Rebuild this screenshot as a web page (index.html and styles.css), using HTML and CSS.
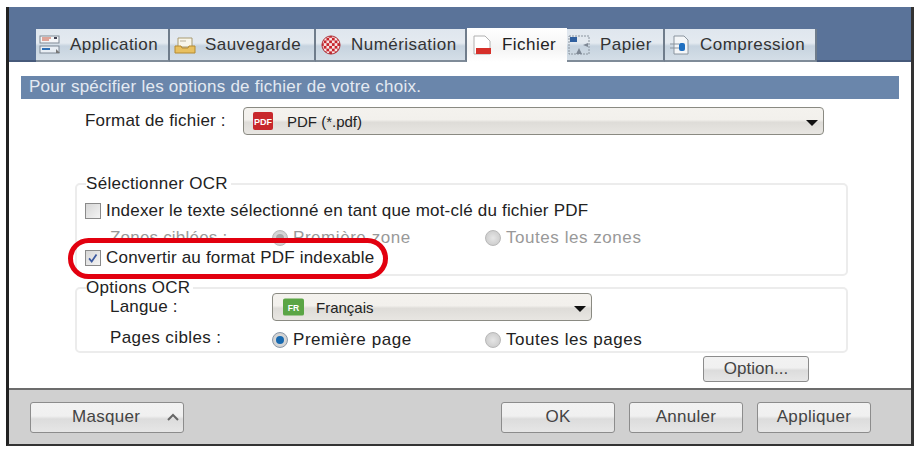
FILE: index.html
```html
<!DOCTYPE html>
<html lang="fr">
<head>
<meta charset="utf-8">
<title>Options de fichier</title>
<link rel="stylesheet" href="styles.css">
</head>
<body>
<div class="window">
  <div class="tabband">
    <div class="tab w-app"><svg class="ti" viewBox="0 0 22 20"><rect x="1" y="1" width="19" height="7" fill="#f4f6f8" stroke="#7d8794"/><rect x="1" y="11" width="19" height="7" fill="#e8eef4" stroke="#7d8794"/><path d="M3 3h9M3 5h7" stroke="#c8553d"/><path d="M3 14h8" stroke="#2f6fb5" stroke-width="2"/><rect x="15" y="2" width="3" height="2" fill="#445"/><path d="M17 14l4 4h-4z" fill="#777"/></svg><span>Application</span></div>
    <div class="tab w-sau"><svg class="ti" viewBox="0 0 22 20"><path d="M4 3h14v9H4z" fill="#f8f6ea" stroke="#a89a70"/><path d="M6 6h6" stroke="#b8b09a"/><path d="M1 11h6l1 2h6l1-2h6v7H1z" fill="#e8c060" stroke="#b48a30"/></svg><span>Sauvegarde</span></div>
    <div class="tab w-num"><svg class="ti" viewBox="0 0 22 22"><defs><pattern id="chk" width="6" height="6" patternUnits="userSpaceOnUse"><rect width="6" height="6" fill="#c8242c"/><rect width="3" height="3" fill="#f6e6e6"/><rect x="3" y="3" width="3" height="3" fill="#f6e6e6"/></pattern></defs><circle cx="11" cy="11" r="10" fill="url(#chk)" stroke="#a82830"/></svg><span>Numérisation</span></div>
    <div class="tab active w-fic"><svg class="ti" viewBox="0 0 22 20"><path d="M3 1h11l5 5v13H3z" fill="#fff" stroke="#b0b0b0"/><rect x="5" y="13" width="15" height="6" fill="#d6302a"/></svg><span>Fichier</span></div>
    <div class="tab w-pap"><svg class="ti" viewBox="0 0 22 20"><rect x="1" y="1" width="20" height="18" fill="none" stroke="#8a949e" stroke-dasharray="2 1"/><rect x="2" y="2" width="7" height="5" fill="#2f5f9f"/><path d="M20 8l-5 2 5 2zM8 19l3-6 3 6z" fill="#7d8794"/></svg><span>Papier</span></div>
    <div class="tab w-com"><svg class="ti" viewBox="0 0 22 20"><path d="M5 1h10l4 4v14H5z" fill="#f4f6f8" stroke="#8a949e"/><path d="M1 9h9M1 13h9" stroke="#8a949e"/><rect x="10" y="8" width="6" height="8" rx="2" fill="#1f6fc0"/></svg><span>Compression</span></div>
  </div>
  <div class="content">
    <div class="info">Pour spécifier les options de fichier de votre choix.</div>
    <div class="formatrow">
      <label class="fmtlabel">Format de fichier :</label>
      <div class="select big"><svg class="badge" viewBox="0 0 20 18"><rect width="20" height="18" rx="2" fill="#c8282c"/><text x="10" y="12.5" class="badgetext" text-anchor="middle">PDF</text></svg><span class="seltext">PDF (*.pdf)</span><i class="arrow"></i></div>
    </div>
    <fieldset class="group g1">
      <legend>Sélectionner OCR</legend>
      <div class="row r1"><span class="check"></span><span>Indexer le texte sélectionné en tant que mot-clé du fichier PDF</span></div>
      <div class="row r2 disabled"><span class="lab">Zones ciblées :</span><span class="opt o1"><span class="radio on-off"></span>Première zone</span><span class="opt"><span class="radio"></span>Toutes les zones</span></div>
      <div class="row r3"><span class="check"><svg viewBox="0 0 16 16"><path d="M3.5 8.5l3 3.5 5.5-8" fill="none" stroke="#3c5aa0" stroke-width="2"/></svg></span><span>Convertir au format PDF indexable</span></div>
      <div class="ring"></div>
    </fieldset>
    <fieldset class="group g2">
      <legend>Options OCR</legend>
      <div class="row r4"><span class="lab">Langue :</span><div class="select small"><svg class="badge fr" viewBox="0 0 22 18"><rect width="22" height="18" rx="2" fill="#5aa545"/><text x="11" y="13" class="badgetext" text-anchor="middle">FR</text></svg><span class="seltext tight">Français</span><i class="arrow"></i></div></div>
      <div class="row r5"><span class="lab up">Pages cibles :</span><span class="opt o1"><span class="radio sel"></span>Première page</span><span class="opt"><span class="radio"></span>Toutes les pages</span></div>
    </fieldset>
    <div class="optrow"><button class="btn opt-btn">Option...</button></div>
  </div>
  <div class="footer">
    <button class="btn fbtn masquer"><span>Masquer</span><svg class="chev" viewBox="0 0 14 9"><path d="M2 7l5-5 5 5" fill="none" stroke="#666" stroke-width="2"/></svg></button>
    <div class="fright">
      <button class="btn fbtn">OK</button>
      <button class="btn fbtn">Annuler</button>
      <button class="btn fbtn">Appliquer</button>
    </div>
  </div>
</div>
</body>
</html>
```
FILE: styles.css
```css
* { box-sizing: border-box; }
html, body { margin: 0; padding: 0; background: #fff; }
body { font-family: "Liberation Sans", Arial, sans-serif; font-size: 17px; letter-spacing: 0.2px; color: #222; }
.window { margin: 7px 0 0 6px; width: 908px; height: 439px; border-left: 3px solid #222; border-right: 3px solid #333; border-bottom: 2px solid #333; display: flex; flex-direction: column; }
.tabband { height: 55px; background: #5a7399; display: flex; align-items: flex-end; padding-left: 27px; flex: none; box-shadow: inset 0 -2px 0 #46597a; }
.tab { height: 33px; display: flex; align-items: center; padding-left: 4px; gap: 9px; letter-spacing: 0.45px; background: linear-gradient(#dfe6ee, #e4eaf0 45%, #c6d3df 55%, #d4dee7); border-bottom: 2px solid #7f8b98; border-right: 2px solid #6f7c8b; color: #333; }
.tab.active { height: 34px; background: linear-gradient(#fff, #f4f4f4 60%, #fff); border: 0; color: #222; }
.w-app { width: 134px; padding-left: 3px; } .w-sau { width: 146px; } .w-num { width: 151px; } .w-fic { width: 100px; } .w-pap { width: 98px; padding-left: 1px; gap: 10px; } .w-com { width: 152px; }
.ti { width: 22px; height: 20px; flex: none; }
.content { flex: 1; background: #fff; padding: 14px 0 0 12px; display: flex; flex-direction: column; }
.info { width: 878px; height: 23px; line-height: 22px; background: #6a86ab; color: #e4eaf2; padding-left: 8px; flex: none; letter-spacing: 0.25px; }
.formatrow { display: flex; align-items: center; margin-top: 8px; height: 28px; padding-left: 64px; flex: none; }
.fmtlabel { width: 158px; }
.select { height: 28px; border: 1px solid #8a8a82; border-radius: 4px; display: flex; align-items: center; background: linear-gradient(#f4f2ee, #f2f0ec 45%, #dedcd8 55%, #e8e6e2); position: relative; letter-spacing: 0; }
.big { width: 581px; padding-left: 9px; }
.small { width: 320px; padding-left: 10px; }
.badge { width: 20px; height: 18px; flex: none; }
.badge.fr { width: 21px; }
.badgetext { font-size: 9px; font-weight: bold; fill: #fff; font-family: "Liberation Sans", sans-serif; }
.seltext { margin-left: 14px; font-size: 15px; }
.seltext.tight { margin-left: 12px; }
.arrow { position: absolute; right: 5px; top: 12px; width: 0; height: 0; border: 6px solid transparent; border-top: 6px solid #111; border-bottom: 0; }
.group { margin: 0 0 0 54px; padding: 0 8px; width: 773px; border: 2px solid #ececec; border-radius: 5px; position: relative; flex: none; }
.g1 { margin-top: 40px; height: 101px; }
.g2 { margin-top: 3px; height: 74px; }
.group legend { padding: 0 3px 0 0; margin-left: 1px; line-height: 18px; height: 18px; font-size: 17px; letter-spacing: 0.3px; }
.row { display: flex; align-items: center; height: 20px; white-space: nowrap; }
.r1 { margin-top: 8px; }
.r2 { margin-top: 7px; padding-left: 25px; color: #999; }
.r3 { margin-top: 0; }
.r4 { padding-left: 25px; height: 28px; margin-top: -4px; }
.r5 { margin-top: 7px; padding-left: 25px; height: 24px; }
.lab { width: 162px; flex: none; }
.up { position: relative; top: -2px; letter-spacing: 0.4px; }
.o1 { width: 213px; flex: none; }
.opt { display: inline-flex; align-items: center; gap: 5px; letter-spacing: 0.55px; }
.check { width: 16px; height: 16px; border: 1px solid #8a8a8a; background: linear-gradient(135deg, #d6d6d6, #f4f4f4); margin-right: 5px; flex: none; display: block; }
.check svg { display: block; width: 14px; height: 14px; }
.radio { width: 16px; height: 16px; border-radius: 50%; background: radial-gradient(#e6e6e6, #c6c6c6); border: 1px solid #b8b8b8; flex: none; position: relative; }
.radio.on-off::after, .radio.sel::after { content: ""; position: absolute; left: 3px; top: 3px; width: 8px; height: 8px; border-radius: 50%; background: #a8a8a8; }
.radio.sel { border-color: #8a98a8; }
.radio.sel::after { background: #1769b0; }
.ring { position: absolute; left: -9px; top: 45px; width: 320px; height: 41px; border: 5px solid #e2000f; border-radius: 21px; }
.optrow { display: flex; padding-left: 682px; margin-top: 3px; flex: none; }
.btn { font-family: "Liberation Sans", sans-serif; font-size: 17px; letter-spacing: 0.3px; color: #444; border: 1px solid #8c8c8c; border-radius: 3px; background: linear-gradient(#f2f2f2, #f0f0f0 45%, #dcdcdc 55%, #e6e6e6); padding: 0; }
.opt-btn { width: 106px; height: 26px; letter-spacing: 0; }
.footer { height: 56px; flex: none; background: #d0d0d0; border-top: 2px solid #6c6c6c; display: flex; align-items: center; justify-content: space-between; padding: 0 40px 0 21px; }
.fbtn { width: 114px; height: 31px; }
.fright { display: flex; gap: 14px; }
.masquer { width: 154px; display: flex; align-items: center; gap: 26px; padding-left: 41px; }
.chev { width: 14px; height: 9px; }
```
